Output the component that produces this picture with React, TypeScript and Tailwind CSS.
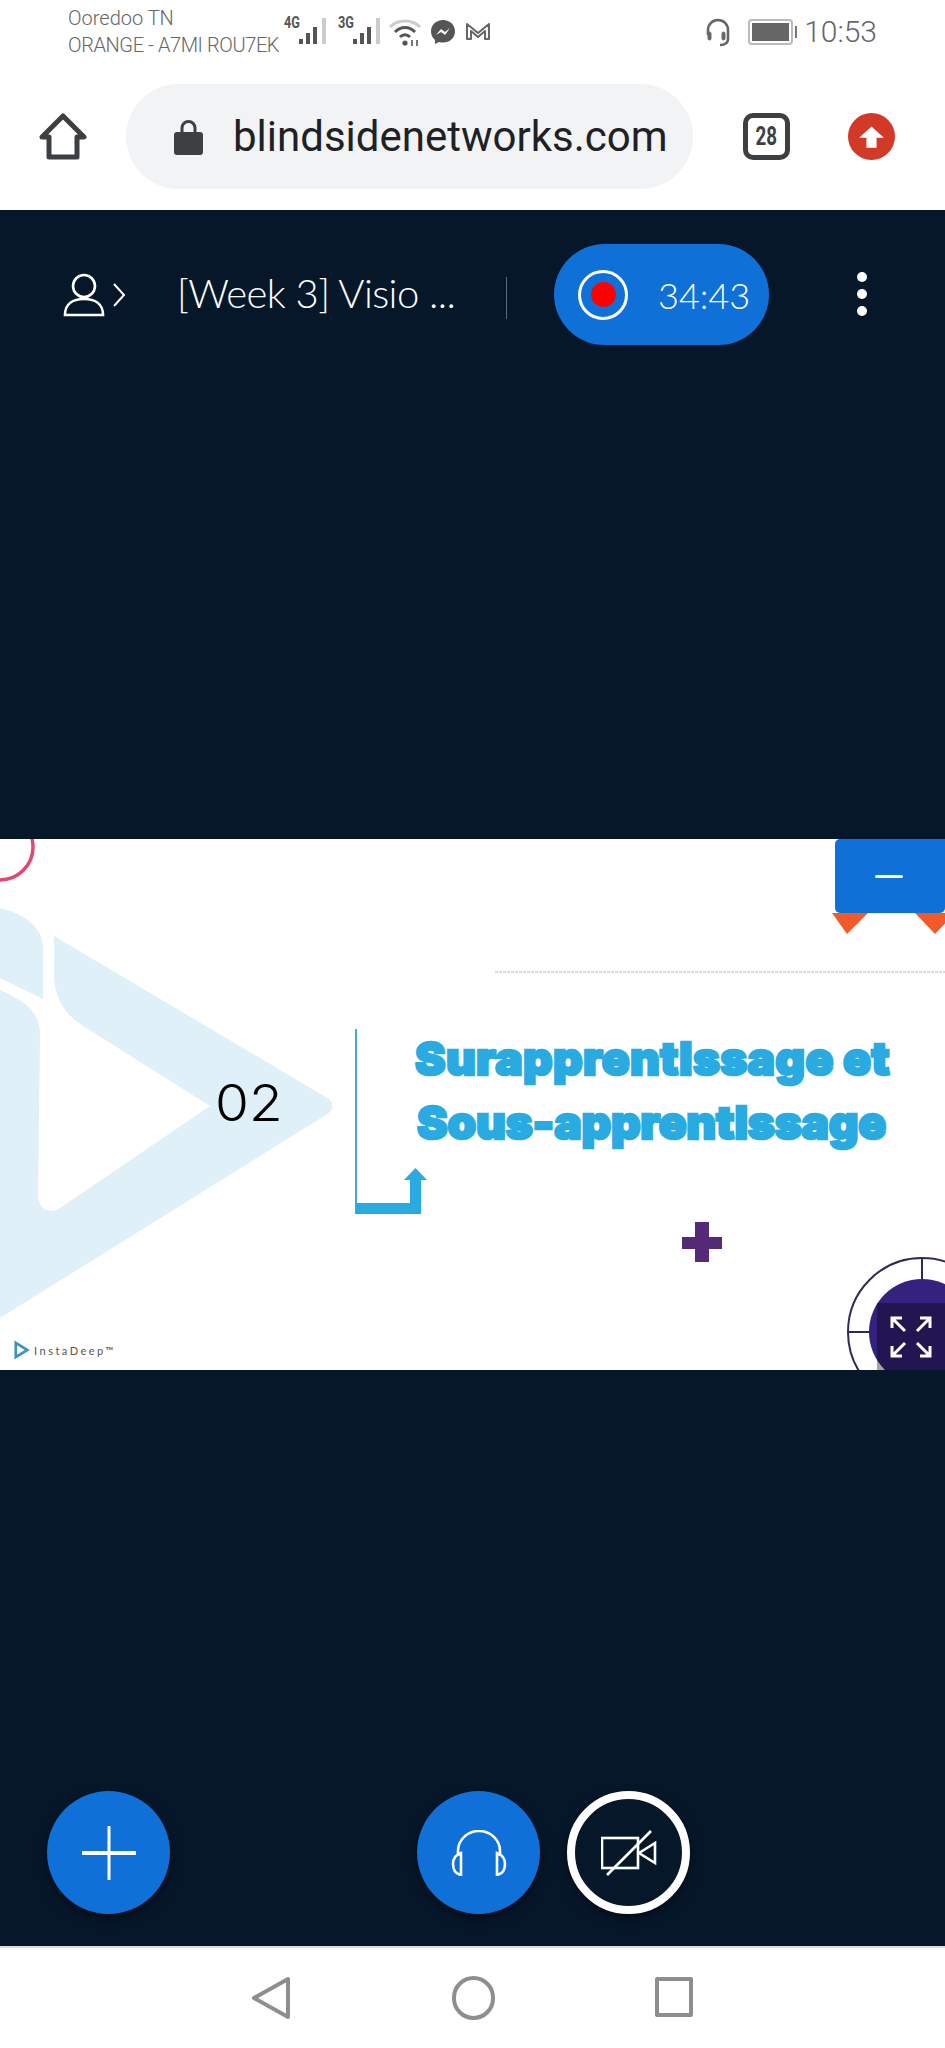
function SignalBars({ label }: { label: string }) {
  return (
    <div className="relative h-[44px] w-[44px]">
      <span className="absolute left-0 top-[14px] origin-left scale-x-75 text-[17px] leading-none font-bold text-[#555]">{label}</span>
      <svg viewBox="0 0 44 44" className="absolute inset-0 h-full w-full">
        <rect x="15" y="39" width="4" height="5" fill="#555" />
        <rect x="22" y="33" width="4" height="11" fill="#555" />
        <rect x="29" y="27" width="4" height="17" fill="#555" />
        <rect x="38" y="18" width="4" height="26" fill="#ccc" />
      </svg>
    </div>
  );
}

function StatusIcons() {
  return (
    <div className="flex items-start gap-[9px]">
      <div className="flex gap-[10px]">
        <SignalBars label="4G" />
        <SignalBars label="3G" />
      </div>
      <svg viewBox="0 0 32 28" className="ml-[-2px] mt-[18px] h-[28px] w-[32px]" fill="none">
        <path d="M1 9 C9 1 23 1 31 9" stroke="#ccc" strokeWidth="3" />
        <path d="M6 14 C12 8 20 8 26 14" stroke="#555" strokeWidth="3" />
        <path d="M11 19 C14 16 18 16 21 19" stroke="#555" strokeWidth="3" />
        <circle cx="16" cy="25" r="2.6" fill="#555" />
        <path d="M23 22 v6 M28 22 v6" stroke="#555" strokeWidth="1.6" />
      </svg>
      <svg viewBox="0 0 26 26" className="mt-[19px] h-[26px] w-[26px]">
        <path d="M13 1 C6 1 1 6 1 12.5 C1 16 2.5 19 5 21 V25 L9 23 C10.2 23.4 11.6 23.6 13 23.6 C20 23.6 25 18.8 25 12.3 C25 6 20 1 13 1 Z" fill="#555" />
        <path d="M6 16 L11 10 L15 13 L20 9 L15 16 L11 13 Z" fill="#fff" />
      </svg>
      <svg viewBox="0 0 26 20" className="mt-[21px] h-[20px] w-[26px]" fill="none">
        <path d="M2 18 V3 L13 12 L24 3 V18 H20 V10 L13 16 L6 10 V18 Z" stroke="#666" strokeWidth="2" strokeLinejoin="round" />
      </svg>
    </div>
  );
}

function StatusBar() {
  return (
    <div className="flex h-[60px] items-start text-[#666] [font-family:Roboto,sans-serif]">
      <div className="ml-[68px] w-[216px] pt-[5px] text-[20px] leading-[27px] font-light">
        <div>Ooredoo TN</div>
        <div className="whitespace-nowrap tracking-[-0.4px]">ORANGE - A7MI ROU7EK</div>
      </div>
      <StatusIcons />
      <div className="ml-auto mr-[68px] flex items-center gap-[7px] pt-[17px]">
        <svg viewBox="0 0 26 30" className="mr-[10px] h-[30px] w-[26px]" fill="none" stroke="#666" strokeWidth="2.6">
          <path d="M3 18 V13 A10 10 0 0 1 23 13 V22 C23 26 20 28 15 28" />
          <rect x="3" y="15" width="3" height="8" rx="1.5" fill="#666" strokeWidth="1" />
          <rect x="17" y="15" width="3" height="8" rx="1.5" fill="#666" strokeWidth="1" />
        </svg>
        <div className="flex items-center">
          <div className="h-[26px] w-[45px] rounded-[4px] border-2 border-[#bbb] p-[2px]">
            <div className="h-full w-full bg-[#666]" />
          </div>
          <div className="ml-[2px] h-[12px] w-[2px] bg-[#777]" />
        </div>
        <span className="text-[30px] leading-none font-light">10:53</span>
      </div>
    </div>
  );
}

function Toolbar() {
  return (
    <div className="flex h-[150px] items-start pt-[24px]">
      <div className="ml-[39px] mt-[29px]">
        <svg viewBox="0 0 48 48" className="h-[48px] w-[48px]" fill="none" stroke="#3c4043" strokeWidth="5" strokeLinejoin="round">
          <path d="M24 3 L45 24 H38 V44 H10 V24 H3 Z" />
        </svg>
      </div>
      <div className="ml-[39px] flex h-[105px] w-[567px] items-center rounded-full bg-[#f1f3f4] pl-[48px]">
        <svg viewBox="0 0 29 36" className="h-[36px] w-[29px]">
          <path d="M8 15 V9 A6.5 6.5 0 0 1 21 9 V15" fill="none" stroke="#3c4043" strokeWidth="3" />
          <rect x="0" y="13" width="29" height="23" rx="3" fill="#3c4043" />
        </svg>
        <span className="ml-[30px] text-[42px] leading-none text-[#202124] [font-family:Roboto,sans-serif]">blindsidenetworks.com</span>
      </div>
      <div className="ml-[50px] mt-[29px] flex h-[47px] w-[47px] items-center justify-center rounded-[10px] border-[5px] border-[#3c4043] text-[25px] leading-none font-bold text-[#3c4043] [font-family:Roboto,sans-serif]">
        <span className="scale-x-75">28</span>
      </div>
      <div className="ml-[58px] mt-[29px] flex h-[47px] w-[47px] items-center justify-center rounded-full bg-[#d03a27]">
        <svg viewBox="0 0 24 24" className="h-[27px] w-[27px]" fill="#fff">
          <path d="M12 3 L23 13 H16.5 V22 H7.5 V13 H1 Z" />
        </svg>
      </div>
    </div>
  );
}

function MeetingHeader() {
  return (
    <div className="flex h-[629px] items-start text-white">
      <div className="ml-[63px] mt-[63px] flex w-[63px] items-center gap-[7px]">
        <svg viewBox="0 0 42 44" className="h-[44px] w-[42px]" fill="none" stroke="#fff" strokeWidth="2.6">
          <circle cx="21" cy="13" r="11" />
          <path d="M2 42 C2 31 10 26 21 26 C32 26 40 31 40 42 Z" />
        </svg>
        <svg viewBox="0 0 14 26" className="h-[26px] w-[14px]" fill="none" stroke="#fff" strokeWidth="2">
          <path d="M2 2 L12 13 L2 24" />
        </svg>
      </div>
      <span className="ml-[51px] mt-[58px] w-[329px] whitespace-nowrap text-[40px] leading-[50px] font-light tracking-[-0.6px] [font-family:Lato,sans-serif]">[Week 3] Visio ...</span>
      <div className="mt-[67px] h-[42px] w-px bg-[#5b6b7c]" />
      <div className="ml-[47px] mt-[34px] flex h-[101px] w-[215px] items-center rounded-full bg-[#0f70d7] pl-[24px]">
        <div className="flex h-[50px] w-[50px] items-center justify-center rounded-full border-[3px] border-white">
          <div className="h-[25px] w-[25px] rounded-full bg-[#f00]" />
        </div>
        <span className="ml-[30px] text-[36px] leading-none font-light [font-family:Lato,sans-serif]">34:43</span>
      </div>
      <div className="ml-[88px] mt-[62px] flex flex-col gap-[7px]">
        <div className="h-[10px] w-[10px] rounded-full bg-white" />
        <div className="h-[10px] w-[10px] rounded-full bg-white" />
        <div className="h-[10px] w-[10px] rounded-full bg-white" />
      </div>
    </div>
  );
}

function Slide() {
  return (
    <div className="relative h-[531px] overflow-hidden bg-white">
      {/* slide artwork, coordinates are the slide's own */}
      <svg viewBox="0 0 945 531" className="absolute inset-0 h-full w-full">
        <path d="M0 69 C20 74 43 85 43 110 V160 L0 139 Z" fill="#dff0f8" />
        <path d="M54 97 L329 260 Q336 267 329 274 L0 479 V151 C20 160 40 170 40 195 L38 355 C38 372 50 375 60 369 L210 267 L88 190 C66 178 54 160 54 135 Z" fill="#dff0f8" />
        <circle cx="0" cy="8" r="33" fill="none" stroke="#e2486f" strokeWidth="3.5" />
        <path d="M356 190 V364" stroke="#45a7cf" strokeWidth="2" />
        <path d="M355 375 V364 H410 V341 H404 L415.5 329 L427 341 H421 V375 Z" fill="#29abe2" />
        <path d="M495 133 H945" stroke="#c5ced6" strokeWidth="1.5" strokeDasharray="3 1" />
        <path d="M832 74 L847 95 L868 74 Z M915 74 L935 95 L955 74 Z" fill="#f15a2b" />
        <path d="M695 383 H709 V398 H722 V410 H709 V423 H695 V410 H682 V398 H695 Z" fill="#552a78" />
        <circle cx="922" cy="493" r="74" fill="none" stroke="#2b2a5e" strokeWidth="2" />
        <path d="M922 419 V441 M848 493 H870" stroke="#2b2a5e" strokeWidth="2" />
        <circle cx="922" cy="493" r="53" fill="#35227f" />
      </svg>

      <span className="absolute left-[215px] top-[232px] origin-left scale-x-110 text-[50px] leading-[64px] font-light text-black [font-family:Inter,sans-serif]">02</span>

      <div className="absolute left-[415px] top-[187px] whitespace-nowrap text-[46px] leading-[64px] font-black text-[#29abe2] [-webkit-text-stroke:2.5px_#29abe2] [font-family:Inter,sans-serif]">
        <div className="tracking-[0.3px]">Surapprentlssage et</div>
        <div className="pl-[2px] tracking-[-0.2px]">Sous-apprentlssage</div>
      </div>

      <div className="absolute bottom-[10px] left-[14px] flex items-center gap-[4px]">
        <svg viewBox="0 0 18 20" className="h-[20px] w-[16px]" fill="none" stroke="#3f93b8" strokeWidth="3">
          <path d="M2 2 L15 10 L2 18 Z" />
        </svg>
        <span className="text-[11px] leading-none tracking-[2.5px] text-[#555] [font-family:Lato,sans-serif]">InstaDeep™</span>
      </div>

      <div className="absolute right-0 top-0 flex h-[74px] w-[110px] items-center justify-center rounded-l-[5px] rounded-b-[5px] rounded-tr-none bg-[#0f70d7]">
        <div className="mr-[2px] h-[3px] w-[28px] rounded-full bg-white" />
      </div>

      <div className="absolute bottom-0 right-0 flex h-[67px] w-[68px] items-center justify-center bg-black/35">
        <svg viewBox="0 0 42 42" className="h-[42px] w-[42px]" fill="none" stroke="#fff" strokeWidth="3">
          <path d="M2 12 V2 H12 M2 2 L15 15" />
          <path d="M30 2 H40 V12 M40 2 L27 15" />
          <path d="M2 30 V40 H12 M2 40 L15 27" />
          <path d="M30 40 H40 V30 M40 40 L27 27" />
        </svg>
      </div>
    </div>
  );
}

function BottomActions() {
  return (
    <div className="flex w-full flex-1 items-end pb-[32px] pl-[47px]">
      <div className="flex h-[123px] w-[123px] items-center justify-center rounded-full bg-[#0f70d7] shadow-[0_4px_10px_rgba(0,0,0,0.5)]">
        <svg viewBox="0 0 54 54" className="h-[54px] w-[54px]" stroke="#fff" strokeLinecap="round">
          <path d="M27 1 V53" strokeWidth="3" />
          <path d="M1 27 H53" strokeWidth="4" />
        </svg>
      </div>
      <div className="ml-[247px] flex h-[123px] w-[123px] items-center justify-center rounded-full bg-[#0f70d7] shadow-[0_4px_10px_rgba(0,0,0,0.5)]">
        <svg viewBox="0 0 56 46" className="h-[46px] w-[56px]" fill="none" stroke="#fff" strokeWidth="2.6">
          <path d="M7 26 V21 A21 20 0 0 1 49 21 V26" />
          <path d="M10 23 C4 25 2 29 2 34 C2 40 5 44 10 45 Z" />
          <path d="M46 23 C52 25 54 29 54 34 C54 40 51 44 46 45 Z" />
        </svg>
      </div>
      <div className="ml-[27px] flex h-[123px] w-[123px] items-center justify-center rounded-full border-[8px] border-white shadow-[0_4px_10px_rgba(0,0,0,0.5)]">
        <svg viewBox="0 0 56 46" className="h-[46px] w-[56px]" fill="none" stroke="#fff" strokeWidth="2.6">
          <rect x="1" y="8" width="36" height="30" />
          <path d="M38 23 L54 13 V33 Z" />
          <path d="M6 45 L50 1" />
        </svg>
      </div>
    </div>
  );
}

function NavBar() {
  return (
    <div className="flex h-[102px] items-start border-t-2 border-[#d8dbe8] bg-white pt-[28px]">
      <svg viewBox="0 0 40 42" className="ml-[251px] h-[44px] w-[40px]" fill="none" stroke="#8e8e8e" strokeWidth="4" strokeLinejoin="round">
        <path d="M37 2 V40 L3 21 Z" />
      </svg>
      <div className="ml-[161px] h-[44px] w-[43px] rounded-full border-[4px] border-[#8e8e8e]" />
      <div className="ml-[160px] mt-[1px] h-[40px] w-[38px] rounded-[2px] border-[4px] border-[#8e8e8e]" />
    </div>
  );
}

export default function App() {
  return (
    <div className="flex h-[2048px] w-[945px] flex-col overflow-hidden bg-white">
      <StatusBar />
      <Toolbar />
      <div className="flex flex-1 flex-col bg-[#06172a]">
        <MeetingHeader />
        <Slide />
        <BottomActions />
      </div>
      <NavBar />
    </div>
  );
}
